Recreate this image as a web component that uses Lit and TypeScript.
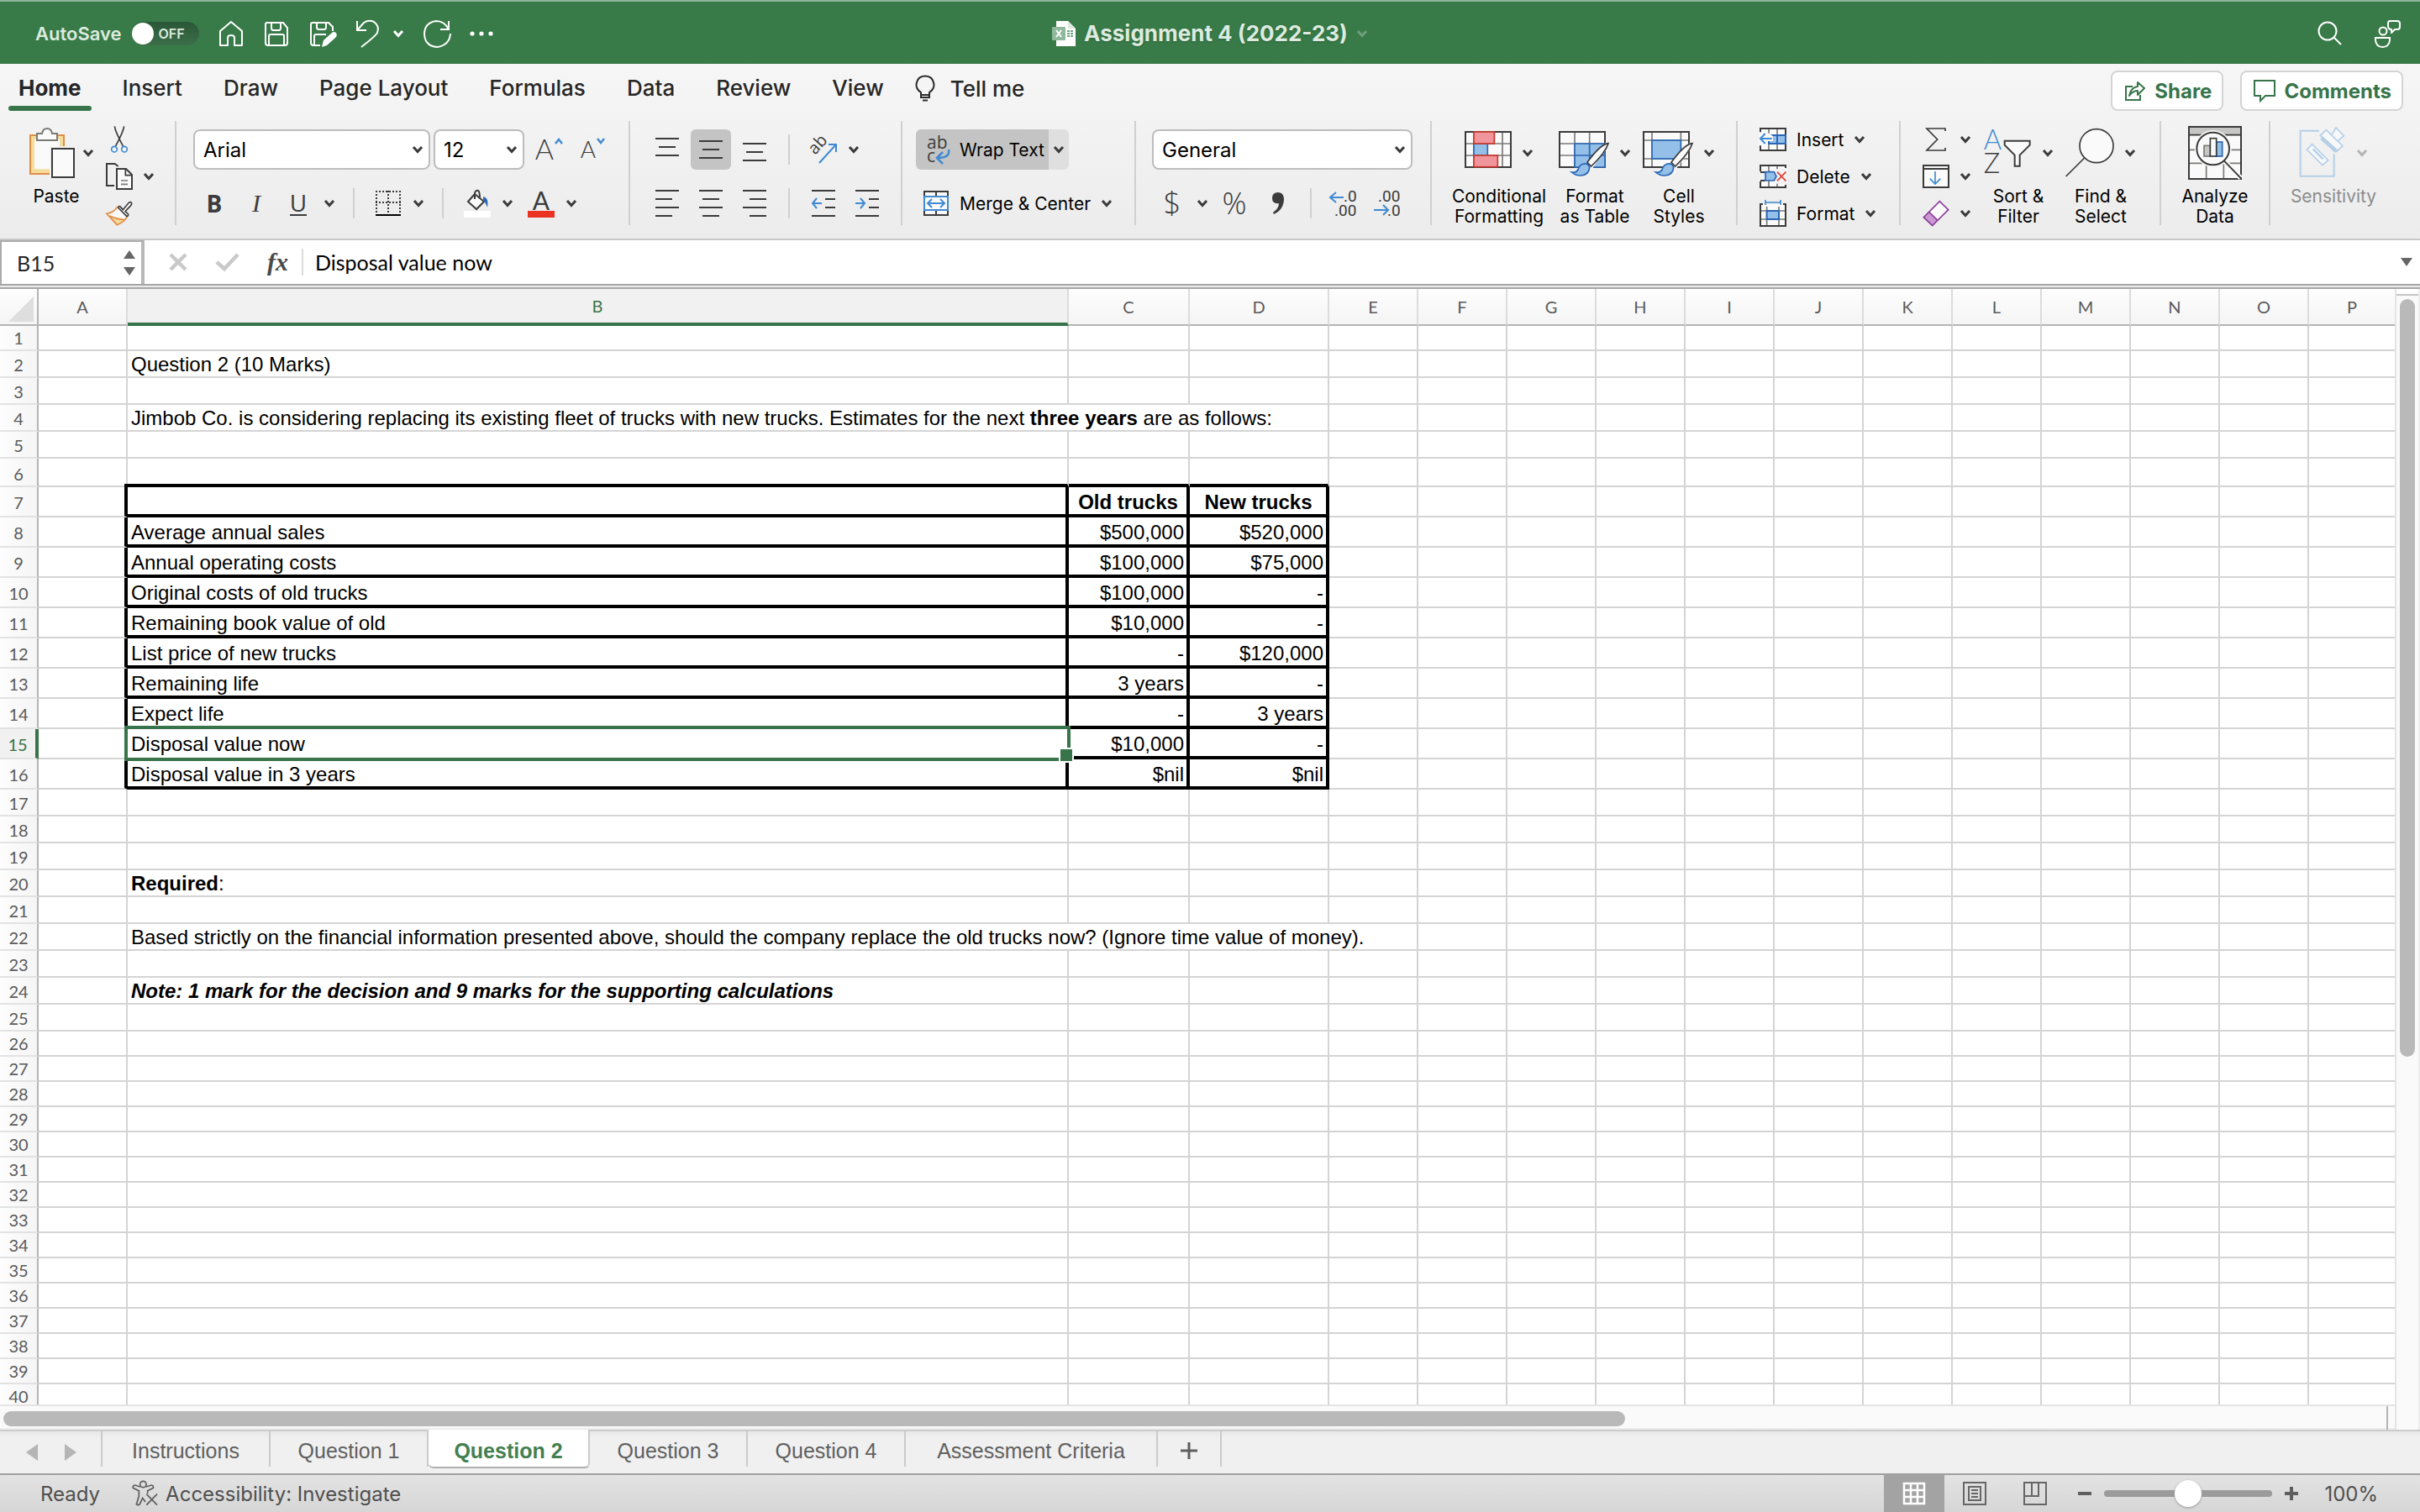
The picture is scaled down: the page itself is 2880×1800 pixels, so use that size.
import { LitElement, html, svg, css, nothing, TemplateResult } from "lit";
import { customElement } from "lit/decorators.js";
import { classMap } from "lit/directives/class-map.js";

const INK = "#3b3b3b";
const BLUE = "#3f8ad2";
const DEEP = "#2a66b5";
const SKY = "#93bfe8";

const icon = (w: number, h: number, box: string, body: unknown) =>
  html`<svg width=${w} height=${h} viewBox=${box} fill="none" stroke-width="2" aria-hidden="true">${body}</svg>`;

const chevron = (color = INK) =>
  icon(14, 10, "0 0 14 10", svg`<path d="M2 2 L7 7.5 L12 2" stroke=${color} stroke-width="3" />`);

const bars = (rows: number[][], extra: unknown = nothing, w = 28, h = 28) =>
  icon(w, h, `0 0 ${w} ${h}`, svg`
    <path d=${rows.map(([a, b, y]) => `M${a} ${y}H${b}`).join("")} stroke=${INK} />${extra}`);

const icons = {
  home: icon(32, 32, "0 0 32 32", svg`<path d="M3 13 L16 2 L29 13 V30 H20 V21 Q20 18 16 18 Q12 18 12 21 V30 H3 Z" stroke="#fff" stroke-linejoin="round" />`),
  save: icon(32, 32, "0 0 32 32", svg`<path d="M4 3 H24 L29 9 V27 Q29 30 26 30 H6 Q3 30 3 27 V5 Q3 3 5 3 Z M10 3 V9 Q10 12 12 12 H19 Q21 12 21 9 V3 M7 30 V19 Q7 17 9 17 H23 Q25 17 25 19 V30" stroke="#fff" />`),
  saveAs: icon(34, 34, "0 0 34 34", svg`<path d="M14 31 H6 Q3 31 3 28 V6 Q3 4 5 4 H24 L29 9 V14 M10 4 V9 Q10 12 12 12 H19 Q21 12 21 9 V4 M7 31 V20 Q7 18 9 18 H21" stroke="#fff" /><path d="M16 33 L18 25 L28 16 Q31 14 33 16.500 Q35 19 32 22 L22 31 Z" fill="#fff" />`),
  undo: icon(30, 34, "0 0 30 34", svg`<path d="M2 2 V13 H13 M2 13 L10 4 Q16 0 22 3 Q29 8 26 16 Q25 19 7 33" stroke="#fff" />`),
  redo: icon(34, 34, "0 0 34 34", svg`<path d="M31 2 V12 H21 M31 12 Q26 2 16 2 Q2 4 2 18 Q3 32 17 33 Q32 31 33 17" stroke="#fff" />`),
  dots: icon(28, 8, "0 0 28 8", svg`<circle cx="3" cy="4" r="2.600" fill="#fff" /><circle cx="14" cy="4" r="2.600" fill="#fff" /><circle cx="25" cy="4" r="2.600" fill="#fff" />`),
  file: icon(28, 30, "0 0 28 30", svg`
    <path d="M5 0 H19 L28 9 V30 H5 Z" fill="#fff" /><path d="M19 0 V9 H28" fill="#dfe9e1" />
    <rect x="0" y="7" width="16" height="16" rx="1" fill="#8fb99b" />
    <path d="M5 11 L11 19 M11 11 L5 19" stroke="#fff" />
    <path d="M18 12h3M22 12h3M18 15h3M22 15h3M18 18h3M22 18h3" stroke="#6fa480" />`),
  search: icon(30, 30, "0 0 30 30", svg`<circle cx="12" cy="12" r="10.500" stroke="#fff" /><path d="M19.500 19.500 L28 28" stroke="#fff" />`),
  people: icon(34, 34, "0 0 34 34", svg`<circle cx="12" cy="14" r="4.500" stroke="#fff" /><path d="M3 22 H20 V25 Q19 33 11.500 33 Q4 33 3 25 Z" stroke="#fff" /><path d="M20 2 H29 Q32 2 32 5 V9 Q32 12 29 12 H26 L22 16 V12 Q18 12 18 8 V5 Q18 2 20 2 Z" stroke="#fff" stroke-linejoin="round" />`),
  bulb: icon(24, 32, "0 0 24 32", svg`<path d="M7 24 V21 Q1 17 1.500 11 Q3 1.500 12 1.500 Q21 1.500 22.500 11 Q23 17 17 21 V27 H7 V24 H17 M9 30.500 H15" stroke="#2b2b2b" />`),
  share: icon(26, 26, "0 0 26 26", svg`<path d="M10 8 H2 V24 H19 V18" stroke="#38744a" /><path d="M6 19 Q8 9 16 8 V3 L24 10 L16 18 V13 Q10 13 6 19 Z" stroke="#38744a" stroke-linejoin="round" />`),
  comment: icon(26, 26, "0 0 26 26", svg`<path d="M1 1 H25 V19 H14 L8 25 V19 H1 Z" stroke="#38744a" />`),
  paste: icon(56, 62, "99 39 168 186", svg`
    <rect x="105" y="69" width="120" height="138" fill="#f5dc9b" stroke="#e08d45" stroke-width="6" />
    <rect x="120" y="84" width="90" height="106" fill="#fafafa" />
    <path d="M129 87 V63 H147 Q150 45 165 45 Q180 45 183 63 H201 V87 Z" fill="#fafafa" stroke="#7a7a76" stroke-width="6" />
    <rect x="174" y="108" width="93" height="117" fill="#f2f2f2" />
    <rect x="183" y="117" width="78" height="102" fill="#fafafa" stroke=${INK} stroke-width="6" />`),
  cut: icon(22, 34, "393 28 66 102", svg`
    <path d="M409 32 Q412 52 440 104 M443 32 Q440 52 412 104" stroke=${INK} stroke-width="5" />
    <circle cx="408" cy="114" r="10" stroke=${BLUE} stroke-width="5" /><circle cx="444" cy="114" r="10" stroke=${BLUE} stroke-width="5" />`),
  copy: icon(34, 34, "375 159 102 102", svg`
    <path d="M408 243 H381 V165 H410 L422 174" stroke=${INK} stroke-width="6" />
    <path d="M417 183 H450 L471 204 V255 H417 Z" fill="#fafafa" stroke=${INK} stroke-width="6" />
    <path d="M448 183 V206 H471" stroke=${INK} stroke-width="5" /><path d="M432 225 H456 M432 238 H456" stroke="#7a7a76" stroke-width="5" />`),
  painter: icon(34, 32, "378 290 100 96", svg`
    <path d="M422 314 Q408 336 383 339 L420 379 Q450 366 458 348 Z" fill="#fafafa" />
    <path d="M394 348 Q424 352 448 358 Q438 372 420 379 Z" fill="#f5dc9b" />
    <path d="M422 314 Q408 336 383 339 L420 379 Q448 368 455 350 M394 347 Q420 360 446 361" stroke="#e08d45" stroke-width="5" />
    <path d="M441 325 L462 300 Q468 296 471 300 Q474 305 469 310 L449 331 L459 340 Q462 346 455 349 L424 318 Q426 308 433 316 Z" fill="#fafafa" stroke=${INK} stroke-width="5" />`),
  borders: icon(32, 32, "0 0 32 32", svg`
    <path d="M1 2 H31 M1 15 H31" stroke=${INK} stroke-dasharray="2 2" /><path d="M2 1 V28 M16 1 V28 M30 1 V28" stroke=${INK} stroke-dasharray="2 2" />
    <path d="M1 30 H31" stroke="#000" />`),
  bucket: icon(32, 34, "0 0 32 34", svg`
    <path d="M13 6 L24 15 L15 24 L5 15 Z" fill="#fafafa" stroke=${INK} /><path d="M13 12 V5 Q14 1 17 2 Q19 3 19 11" stroke=${INK} />
    <path d="M23 9 Q30 10 28 22 Q26 16 23 13 Z" fill=${DEEP} /><rect x="0" y="26" width="32" height="8" fill="#fff" />`),
  up: icon(12, 8, "0 0 12 8", svg`<path d="M2 7 L6 2 L10 7" stroke=${BLUE} stroke-width="2.500" />`),
  down: icon(12, 8, "0 0 12 8", svg`<path d="M2 1 L6 6 L10 1" stroke=${BLUE} stroke-width="2.500" />`),
  top: bars([[0, 28, 1], [4, 24, 11], [0, 28, 21]]),
  middle: bars([[0, 28, 4], [4, 24, 14], [0, 28, 24]]),
  bottom: bars([[0, 28, 7], [4, 24, 17], [0, 28, 27]]),
  left: bars([[0, 28, 1], [0, 20, 11], [0, 28, 21], [0, 20, 31]], nothing, 28, 32),
  center: bars([[0, 28, 1], [4, 24, 11], [0, 28, 21], [4, 24, 31]], nothing, 28, 32),
  right: bars([[0, 28, 1], [8, 28, 11], [0, 28, 21], [8, 28, 31]], nothing, 28, 32),
  outdent: bars([[0, 28, 1], [16, 28, 11], [16, 28, 21], [0, 28, 31]], svg`<path d="M12 16 H1 M6 10 L1 16 L6 22" stroke=${BLUE} />`, 28, 32),
  indent: bars([[0, 28, 1], [16, 28, 11], [16, 28, 21], [0, 28, 31]], svg`<path d="M0 16 H11 M6 10 L11 16 L6 22" stroke=${BLUE} />`, 28, 32),
  orient: icon(34, 34, "0 0 34 34", svg`
    <text x="7" y="24" transform="rotate(-48 7 24)" class="glyph" font-size="20">ab</text>
    <path d="M12 33 L32 11 M23 11 H32 V20" stroke=${BLUE} />`),
  wrap: icon(32, 34, "0 0 32 34", svg`
    <text x="5" y="16" class="glyph" font-size="21">ab</text><text x="5" y="32" class="glyph" font-size="21">c</text>
    <path d="M31 17 Q33 27 18 27 M24 20 L17 27 L24 34" stroke=${BLUE} stroke-width="2.500" />`),
  merge: icon(32, 32, "0 0 32 32", svg`
    <path d="M2 2 H30 V30 H2 Z M16 1 V8 M16 24 V31" fill="#fafafa" stroke=${INK} />
    <rect x="2" y="8" width="28" height="16" fill="#fafafa" stroke=${BLUE} /><path d="M6 16 H26 M11 11 L6 16 L11 21 M21 11 L26 16 L21 21" stroke=${BLUE} />`),
  comma: icon(16, 28, "0 0 16 28", svg`<path d="M8 1 Q15 1 15 10 Q14 22 3 27 L2 25 Q9 20 9 14 Q1 15 1 8 Q1 1 8 1 Z" fill=${INK} />`),
  decInc: icon(34, 34, "0 0 34 34", svg`
    <text x="17" y="15" class="num">.0</text><text x="6" y="32" class="num">.00</text><path d="M17 10 H1 M8 4 L1 10 L8 16" stroke=${BLUE} />`),
  decDec: icon(34, 34, "0 0 34 34", svg`
    <text x="6" y="15" class="num">.00</text><text x="17" y="32" class="num">.0</text><path d="M1 25 H18 M12 19 L18 25 L12 31" stroke=${BLUE} />`),
  condFmt: icon(56, 60, "39 48 168 180", svg`
    <path d="M42 63 H204 V189 H42 Z" fill="#fafafa" /><path d="M42 105 H204 M42 147 H204 M72 63 V189 M145 63 V189 M174 63 V189" stroke="#7a7a76" stroke-width="5" />
    <path d="M42 63 H204 V189 H42 Z" stroke=${INK} stroke-width="6" />
    <rect x="122" y="108" width="48" height="36" fill="#fafafa" /><rect x="72" y="105" width="49" height="42" fill=${SKY} stroke=${DEEP} stroke-width="5" />
    <rect x="72" y="63" width="73" height="42" fill="#f0959b" stroke="#c8372b" stroke-width="5" /><rect x="72" y="147" width="85" height="41" fill="#f0959b" stroke="#c8372b" stroke-width="5" />`),
  tableFmt: icon(60, 60, "384 48 180 180", svg`
    <path d="M387 63 H549 V189 H387 Z" fill="#fafafa" /><path d="M387 105 H549 M387 147 H549 M441 63 V189 M494 63 V189" stroke="#7a7a76" stroke-width="5" />
    <path d="M387 63 H549 V189 H387 Z" stroke=${INK} stroke-width="6" />
    <path d="M441 105 H549 V189 H441 Z M441 147 H549 M494 105 V189" fill=${SKY} stroke=${DEEP} stroke-width="5" />${brush(0)}`),
  cellFmt: icon(60, 60, "684 48 180 180", svg`
    <path d="M687 63 H849 V189 H687 Z" fill="#fafafa" /><path d="M687 93 H849 M687 159 H849 M717 63 V189 M820 63 V189" stroke="#7a7a76" stroke-width="5" />
    <path d="M687 63 H849 V189 H687 Z" stroke=${INK} stroke-width="6" />
    <rect x="717" y="93" width="103" height="66" fill=${SKY} stroke=${DEEP} stroke-width="5" />${brush(300)}`),
  insert: icon(32, 28, "1092 36 96 84", svg`
    <path d="M1095 39 H1185 V117 H1095 Z" fill="#fafafa" /><path d="M1125 39 V117 M1155 39 V117" stroke="#7a7a76" stroke-width="5" /><path d="M1095 39 H1185 V117 H1095 Z" stroke=${INK} stroke-width="6" />
    <path d="M1125 63 H1185 V93 H1125 Z M1155 63 V93" fill=${SKY} stroke=${DEEP} stroke-width="6" />
    <path d="M1089 52 H1118 L1140 66 V84 H1118 L1110 100 H1089 Z" fill="#f8f8f8" /><path d="M1136 75 H1096 M1112 57 L1095 75 L1112 93" stroke=${BLUE} stroke-width="6" />`),
  del: icon(32, 28, "1092 168 96 84", svg`
    <path d="M1095 171 H1185 V249 H1095 Z" fill="#fafafa" /><path d="M1125 171 V249 M1155 171 V249" stroke="#7a7a76" stroke-width="5" />
    <path d="M1095 192 V171 H1185 V180 M1095 228 V249 H1185 V240 M1095 195 H1112 M1095 225 H1112" stroke=${INK} stroke-width="6" />
    <path d="M1090 198 H1112 V222 H1090 Z M1150 184 H1190 V236 H1150 Z" fill="#f2f2f2" />
    <path d="M1113 194 H1144 L1152 210 L1144 225 H1113 Z" fill=${SKY} stroke=${DEEP} stroke-width="5" /><path d="M1155 194 L1186 226 M1186 194 L1155 226" stroke="#dc4b43" stroke-width="6" />`),
  format: icon(32, 32, "1092 294 96 96", svg`
    <path d="M1095 309 H1185 V387 H1095 Z" fill="#fafafa" /><path d="M1095 333 H1185 M1095 363 H1185 M1118 318 V387 M1161 318 V387" stroke="#7a7a76" stroke-width="5" />
    <path d="M1104 309 H1095 V387 H1185 V309 H1176" stroke=${INK} stroke-width="6" /><rect x="1118" y="333" width="43" height="30" fill=${SKY} stroke=${DEEP} stroke-width="6" />
    <path d="M1113 303 H1167 M1113 294 V312 M1167 294 V312" stroke=${BLUE} stroke-width="5" />`),
  sum: icon(26, 28, "34 36 78 84", svg`<path d="M106 48 V39 H40 L78 78 L40 117 H106 V108" stroke=${INK} stroke-width="5" />`),
  fill: icon(32, 28, "24 168 96 84", svg`<path d="M27 171 H117 V249 H27 Z M27 183 H117" fill="#fafafa" stroke=${INK} stroke-width="6" /><path d="M69 192 V236 M50 218 L69 237 L88 218" stroke=${BLUE} stroke-width="5" />`),
  eraser: icon(32, 32, "23 293 96 96", svg`<path d="M84 298 L115 328 L58 385 L27 355 Z" fill="#fafafa" /><path d="M46 336 L77 366 L58 385 L27 355 Z" fill="#cb98d3" /><path d="M84 298 L115 328 L58 385 L27 355 Z M46 336 L77 366" stroke="#8c3e9d" stroke-width="5" />`),
  sort: icon(58, 60, "244 40 174 180", svg`
    <text x="246" y="119" class="glyph light blue" font-size="98">A</text><text x="246" y="203" class="glyph light" font-size="98">Z</text>
    <path d="M321 87 H411 V102 L375 138 V177 H357 V138 L321 102 Z" fill="#fafafa" stroke=${INK} stroke-width="6" />`),
  find: icon(58, 60, "540 40 174 180", svg`<circle cx="651" cy="105" r="60" fill="#fafafa" stroke=${INK} stroke-width="5" /><path d="M608 148 L542 214" stroke=${INK} stroke-width="5" />`),
  analyze: icon(64, 64, "972 30 192 192", svg`
    <rect x="975" y="33" width="186" height="186" fill="#fafafa" /><rect x="975" y="33" width="186" height="28" fill="#c6c6c4" />
    <path d="M975 115 H1161 M975 163 H1161 M1037 163 V219 M1099 163 V219" stroke="#7a7a76" stroke-width="5" /><path d="M975 62 H1161" stroke=${INK} stroke-width="5" />
    <path d="M975 33 H1161 V219 H975 Z" stroke=${INK} stroke-width="6" /><path d="M1098 152 L1160 216" stroke="#fafafa" stroke-width="18" />
    <circle cx="1061" cy="111" r="66" fill="#fafafa" /><circle cx="1061" cy="111" r="58" stroke=${INK} stroke-width="6" /><path d="M1101 155 L1162 218" stroke=${INK} stroke-width="6" />
    <rect x="1029" y="100" width="22" height="38" fill="#c6c6c4" stroke="#7a7a76" stroke-width="5" /><rect x="1073" y="87" width="21" height="51" fill=${SKY} stroke=${DEEP} stroke-width="5" /><rect x="1051" y="74" width="22" height="64" fill="#fafafa" stroke=${INK} stroke-width="5" />`),
  sensitivity: icon(56, 64, "1390 28 168 192", svg`
    <g stroke="#b5cfe8" stroke-width="6"><path d="M1462 45 H1395 V207 H1515 V128" />
    <path d="M1437 93 L1494 150 L1474 168 L1418 112 Z" fill="#f6f8fa" stroke-width="5" /><path d="M1440 110 L1476 146" stroke-width="7" />
    <path d="M1487 42 L1546 99 L1524 119 L1466 62 Z" fill="#f6f8fa" stroke-width="5" /><path d="M1470 70 L1524 119" stroke-width="14" /><path d="M1508 58 L1522 34 L1550 63 L1530 80" fill="#f6f8fa" stroke-width="5" /></g>`),
  cancel: icon(24, 24, "0 0 24 24", svg`<path d="M3 3 L21 21 M21 3 L3 21" stroke="#c9c9c9" stroke-width="4.500" />`),
  check: icon(30, 24, "0 0 30 24", svg`<path d="M2 12 L11 20 L27 3" stroke="#c9c9c9" stroke-width="4.500" />`),
  tri: (dir: "up" | "down" | "left" | "right", color: string) =>
    icon(16, 20, "0 0 16 20", svg`<path fill=${color} d=${{ up: "M1 15 L8 5 L15 15 Z", down: "M1 5 L15 5 L8 15 Z", left: "M15 0 L1 10 L15 20 Z", right: "M1 0 L15 10 L1 20 Z" }[dir]} />`),
  a11y: icon(32, 32, "472 214 96 96", svg`<g stroke="#5c5c5c" stroke-width="5"><circle cx="512" cy="229" r="11" />
    <path d="M502 238 L482 232 Q474 234 476 242 L497 252 V272 L488 300 Q494 306 500 300 L510 278 L520 292 M522 238 L542 232 Q550 234 548 242 L528 252 V262" /><path d="M524 264 L562 303 M562 264 L524 303" /></g>`),
  viewNormal: icon(28, 28, "0 0 28 28", svg`<path d="M2 2 H26 V26 H2 Z M2 10 H26 M2 18 H26 M10 2 V26 M18 2 V26" stroke="#fff" stroke-width="2.500" />`),
  viewPage: icon(28, 28, "0 0 28 28", svg`<path d="M1 1 H27 V27 H1 Z M7 6 H21 V22 H7 Z M10 10 H18 M10 14 H18 M10 18 H18" stroke="#666" />`),
  viewBreak: icon(28, 28, "0 0 28 28", svg`<path d="M1 1 H27 V27 H1 Z M1 17 H18 V1 M10 1 V17" stroke="#666" />`),
  minus: icon(18, 18, "0 0 18 18", svg`<path d="M1 9 H17" stroke="#5f5f5f" stroke-width="4" />`),
  plus: icon(18, 18, "0 0 18 18", svg`<path d="M1 9 H17 M9 1 V17" stroke="#5f5f5f" stroke-width="4" />`),
  add: icon(20, 20, "0 0 20 20", svg`<path d="M0 10 H20 M10 0 V20" stroke="#5f5f5f" stroke-width="3" />`),
};

function brush(dx: number) {
  return svg`<g transform="translate(${dx} 0)">
    <path d="M560 104 L500 186 Q494 216 464 220 Q440 222 430 207" stroke="#f2f2f2" stroke-width="16" />
    <path d="M561 104 Q534 106 486 172 L500 186 Q550 138 561 104 Z" fill="#fafafa" stroke=${INK} stroke-width="5" />
    <path d="M494 190 Q488 172 470 178 Q456 184 453 198 Q446 210 430 207 Q444 220 464 219 Q492 216 494 190 Z" fill=${SKY} stroke=${DEEP} stroke-width="5" /></g>`;
}

interface SheetRow { label: string; old: string; next: string }

const COLUMNS = "ABCDEFGHIJKLMNOP".split("");
const RIBBON_TABS = ["Home", "Insert", "Draw", "Page Layout", "Formulas", "Data", "Review", "View"];
const SHEETS = ["Instructions", "Question 1", "Question 2", "Question 3", "Question 4", "Assessment Criteria"];
const TABLE_START = 7;
const TABLE: SheetRow[] = [
  { label: "", old: "Old trucks", next: "New trucks" },
  { label: "Average annual sales", old: "$500,000", next: "$520,000" },
  { label: "Annual operating costs", old: "$100,000", next: "$75,000" },
  { label: "Original costs of old trucks", old: "$100,000", next: "-" },
  { label: "Remaining book value of old", old: "$10,000", next: "-" },
  { label: "List price of new trucks", old: "-", next: "$120,000" },
  { label: "Remaining life", old: "3 years", next: "-" },
  { label: "Expect life", old: "-", next: "3 years" },
  { label: "Disposal value now", old: "$10,000", next: "-" },
  { label: "Disposal value in 3 years", old: "$nil", next: "$nil" },
];
const SELECTED_ROW = 15;
const NOTES: Record<number, { span: number; body: TemplateResult }> = {
  2: { span: 1, body: html`Question 2 (10 Marks)` },
  4: { span: 3, body: html`Jimbob Co. is considering replacing its existing fleet of trucks with new trucks. Estimates for the next <b>three years</b> are as follows:` },
  20: { span: 1, body: html`<b>Required</b>:` },
  22: { span: 4, body: html`Based strictly on the financial information presented above, should the company replace the old trucks now? (Ignore time value of money).` },
  24: { span: 1, body: html`<b><i>Note: 1 mark for the decision and 9 marks for the supporting calculations</i></b>` },
};

const shared = css`
  :host, * { box-sizing: border-box; }
  svg { display: block; flex: none; overflow: visible; }
  button { appearance: none; border: 0; margin: 0; padding: 0; background: none; font: inherit; color: inherit; display: flex; align-items: center; justify-content: center; white-space: nowrap; }
  input, select { appearance: none; border: 0; margin: 0; padding: 0; background: none; font: inherit; color: inherit; border-radius: 0; min-width: 0; outline: 0; }
  .glyph { font-family: "Open Sans", sans-serif; fill: #3b3b3b; stroke: none; }
  .glyph.light { font-family: Lato, sans-serif; font-weight: 300; }
  .glyph.blue { fill: #3f8ad2; }
  .num { font: 19px Roboto, sans-serif; fill: #3b3b3b; stroke: none; }
`;

@customElement("title-bar")
export class TitleBar extends LitElement {
  static styles = [shared, css`
    :host { display: grid; grid-template-columns: 1fr auto 1fr; align-items: center; height: 76px; padding: 2px 22px 0; background: #387a48; border-top: 2px solid #8db398; color: #dcebdf; }
    .side { display: flex; align-items: center; gap: 22px; padding-left: 20px; }
    .end { justify-content: flex-end; gap: 36px; }
    .auto { display: flex; align-items: center; gap: 12px; font-weight: 600; font-size: 22px; }
    .switch { width: 80px; height: 28px; border-radius: 14px; background: linear-gradient(#2a5737, #3c6e4a); justify-content: flex-start; gap: 6px; font-size: 16px; font-weight: 600; }
    .knob { width: 26px; height: 26px; border-radius: 13px; background: #fff; }
    .undo { display: flex; align-items: center; gap: 14px; }
    .name { gap: 10px; text-shadow: 0 1px 2px #2c6138; }
    h1 { margin: 0; font-size: 26px; line-height: 32px; font-weight: 700; }
  `];
  render() {
    return html`
      <div class="side">
        <div class="auto"><span id="autosave">AutoSave</span>
          <button class="switch" role="switch" aria-checked="false" aria-labelledby="autosave"><span class="knob"></span>OFF</button></div>
        <button aria-label="Home">${icons.home}</button>
        <button aria-label="Save">${icons.save}</button>
        <button aria-label="Save a copy">${icons.saveAs}</button>
        <div class="undo"><button aria-label="Undo">${icons.undo}</button><button aria-label="Undo history">${chevron("#fff")}</button></div>
        <button aria-label="Redo">${icons.redo}</button>
        <button aria-label="More">${icons.dots}</button>
      </div>
      <button class="name">${icons.file}<h1>Assignment 4 (2022-23)</h1>${chevron("#6f9f7c")}</button>
      <div class="side end"><button aria-label="Search">${icons.search}</button><button aria-label="Share presence">${icons.people}</button></div>`;
  }
}

@customElement("ribbon-bar")
export class RibbonBar extends LitElement {
  static styles = [shared, css`
    :host { display: block; height: 210px; background: linear-gradient(#f6f6f6, #ececec); border-bottom: 2px solid #c8c8c8; color: #000; }
    .tabs { display: flex; height: 64px; padding: 0 20px 0 10px; color: #262626; font-size: 26px; font-weight: 500; }
    .tabs nav { display: flex; flex: 1; gap: 25px; }
    .tab { flex-direction: column; align-items: stretch; justify-content: flex-end; height: 56px; }
    .tab span { padding: 0 12px; line-height: 42px; }
    .tab i { height: 6px; border-radius: 3px; }
    .tab.on { font-weight: 700; }
    .tab.on i { background: #38744a; }
    .tell { height: 56px; gap: 18px; padding-top: 2px; }
    .actions { display: flex; gap: 20px; padding-top: 8px; }
    .actions button { height: 48px; padding: 0 12px 0 14px; gap: 10px; background: #fff; border: 2px solid #d4d4d4; border-radius: 8px; color: #38744a; font-weight: 700; font-size: 24px; }
    .groups { display: flex; align-items: flex-start; padding-top: 4px; font-size: 21px; }
    .group { flex: none; display: flex; align-items: flex-start; height: 124px; border-right: 2px solid #d0d0d0; }
    .group:last-child { border-right: 0; }
    .clip { width: 210px; padding-left: 34px; }
    .font { width: 540px; padding-left: 20px; }
    .align { width: 324px; padding-left: 20px; }
    .wrapping { width: 278px; padding-left: 16px; }
    .number { width: 352px; padding-left: 19px; }
    .styles { width: 364px; padding-left: 23px; }
    .cells { width: 194px; padding-left: 26px; }
    .edit { width: 310px; padding-left: 26px; }
    .analysis { width: 130px; padding-left: 14px; }
    .protect { width: 130px; padding-left: 20px; }
    .rows { display: flex; flex-direction: column; gap: 16px; padding-top: 10px; }
    .row { display: flex; align-items: center; height: 48px; }
    .spaced { gap: 4px; }
    .combo { display: grid; align-items: center; height: 48px; background: #fff; border: 2px solid #bdbdbd; border-radius: 8px; font-size: 24px; }
    .combo select, .combo svg { grid-area: 1 / 1; }
    .combo select { padding-left: 10px; height: 44px; }
    .combo svg { justify-self: end; margin-right: 6px; pointer-events: none; }
    .wide { width: 282px; } .narrow { width: 108px; } .format { width: 310px; }
    .b48 { width: 48px; height: 48px; border-radius: 6px; }
    .b50 { width: 50px; height: 48px; }
    .b52 { width: 52px; height: 48px; }
    .more { width: 24px; height: 48px; }
    .on48 { background: #c4c4c4; }
    .sep { flex: none; width: 2px; height: 36px; margin: 0 16px; background: #d0d0d0; }
    .spaced .sep, .number .sep { margin: 0 12px; }
    .split, .pair { display: flex; }
    .bold, .under { color: #3b3b3b; font: 28px/32px "Open Sans", sans-serif; }
    .bold { font-weight: 700; }
    .ital { color: #3b3b3b; font: italic 30px/32px "Liberation Serif", serif; }
    .under span { border-bottom: 2px solid #3b3b3b; line-height: 28px; }
    .cur { color: #3b3b3b; font: 300 36px/36px "Open Sans", sans-serif; }
    .grow { align-items: flex-start; padding-top: 6px; color: #3b3b3b; font: 300 34px/34px Lato, sans-serif; }
    .shrink { font-size: 28px; }
    .grow svg { margin-top: 4px; }
    .fontcolor { flex-direction: column; margin-left: 4px; color: #3b3b3b; font: 30px/26px Lato, sans-serif; }
    .fontcolor i { width: 32px; height: 8px; background: #ea3323; }
    .wraptext { height: 48px; width: 158px; padding-left: 8px; gap: 12px; justify-content: flex-start; background: #c4c4c4; border-radius: 6px 0 0 6px; }
    .wrapmore { width: 24px; height: 48px; background: #dfdfdf; border-radius: 0 6px 6px 0; }
    .merge { height: 48px; padding-left: 8px; gap: 12px; }
    .stack { flex-direction: column; gap: 8px; padding-top: 6px; line-height: 24px; text-align: center; align-items: center; justify-content: flex-start; }
    .stack .ico { display: flex; align-items: center; gap: 12px; height: 64px; }
    .stack.paste { width: 66px; }
    .stack.paste .ico { align-self: flex-start; gap: 8px; }
    .large { width: 114px; } .medium { width: 86px; } .tool { width: 84px; } .full { width: 100px; }
    .styles, .edit { gap: 14px; }
    .list { display: flex; flex-direction: column; }
    .list.after { margin-left: 26px; }
    .list button { height: 44px; gap: 12px; justify-content: flex-start; }
    .slot { width: 32px; display: flex; justify-content: center; }
    .dim { color: #8c8c8c; }
  `];

  private stack(size: string, art: unknown, label: unknown, more: unknown = chevron()) {
    return html`<button class="stack ${size}"><span class="ico">${art}${more}</span><span>${label}</span></button>`;
  }
  private tool(label: string, art: unknown, cls = "b48") {
    return html`<button class=${cls} aria-label=${label}>${art}</button>`;
  }
  private more(label: string, cls = "more") {
    return html`<button class=${cls} aria-label=${label}>${chevron()}</button>`;
  }
  private combo(label: string, value: string, cls: string) {
    return html`<div class="combo ${cls}"><select aria-label=${label}><option>${value}</option></select>${chevron()}</div>`;
  }
  private item(label: string, art: unknown, text = "", more = true) {
    return html`<button aria-label=${label}><span class="slot">${art}</span>${text ? html`<span>${text}</span>` : nothing}${more ? chevron() : nothing}</button>`;
  }

  render() {
    return html`
      <div class="tabs">
        <nav aria-label="Ribbon">
          ${RIBBON_TABS.map((t, i) => html`<button class=${classMap({ tab: true, on: i === 0 })}><span>${t}</span><i></i></button>`)}
          <button class="tell">${icons.bulb}<span>Tell me</span></button>
        </nav>
        <div class="actions"><button>${icons.share}Share</button><button>${icons.comment}Comments</button></div>
      </div>
      <div class="groups">
        <section class="group clip">
          ${this.stack("paste", icons.paste, "Paste")}
          <div class="list after">${this.item("Cut", icons.cut, "", false)}${this.item("Copy", icons.copy)}${this.item("Format painter", icons.painter, "", false)}</div>
        </section>
        <section class="group font"><div class="rows">
          <div class="row spaced">${this.combo("Font", "Arial", "wide")}${this.combo("Font size", "12", "narrow")}
            <div class="pair"><button class="b52 grow" aria-label="Increase font size">A${icons.up}</button><button class="b52 grow shrink" aria-label="Decrease font size">A${icons.down}</button></div></div>
          <div class="row"><button class="b50 bold">B</button><button class="b50 ital">I</button><button class="b50 under"><span>U</span></button>${this.more("Underline style")}
            <i class="sep"></i>${this.tool("Borders", icons.borders)}${this.more("Border style")}
            <i class="sep"></i>${this.tool("Fill colour", icons.bucket)}${this.more("Fill colours")}
            <button class="b48 fontcolor" aria-label="Font colour">A<i></i></button>${this.more("Font colours")}</div>
        </div></section>
        <section class="group align"><div class="rows">
          <div class="row spaced">${this.tool("Top align", icons.top)}${this.tool("Middle align", icons.middle, "b48 on48")}${this.tool("Bottom align", icons.bottom)}
            <i class="sep"></i><span class="split">${this.tool("Orientation", icons.orient)}${this.more("Orientation options")}</span></div>
          <div class="row spaced">${this.tool("Align left", icons.left)}${this.tool("Center", icons.center)}${this.tool("Align right", icons.right)}
            <i class="sep"></i>${this.tool("Decrease indent", icons.outdent)}${this.tool("Increase indent", icons.indent)}</div>
        </div></section>
        <section class="group wrapping"><div class="rows">
          <div class="row"><button class="wraptext">${icons.wrap}Wrap Text</button>${this.more("Wrap options", "wrapmore")}</div>
          <div class="row"><button class="merge">${icons.merge}Merge &amp; Center${chevron()}</button></div>
        </div></section>
        <section class="group number"><div class="rows">
          ${this.combo("Number format", "General", "format")}
          <div class="row"><button class="b48 cur">$</button>${this.more("Currency")}<button class="b52 cur">%</button>${this.tool("Comma style", icons.comma, "b52")}
            <i class="sep"></i>${this.tool("Increase decimal", icons.decInc, "b52")}${this.tool("Decrease decimal", icons.decDec, "b52")}</div>
        </div></section>
        <section class="group styles">
          ${this.stack("large", icons.condFmt, html`Conditional<br />Formatting`)}
          ${this.stack("medium", icons.tableFmt, html`Format<br />as Table`)}
          ${this.stack("medium", icons.cellFmt, html`Cell<br />Styles`)}
        </section>
        <section class="group cells"><div class="list">
          ${this.item("Insert", icons.insert, "Insert")}${this.item("Delete", icons.del, "Delete")}${this.item("Format", icons.format, "Format")}
        </div></section>
        <section class="group edit">
          <div class="list">${this.item("AutoSum", icons.sum)}${this.item("Fill", icons.fill)}${this.item("Clear", icons.eraser)}</div>
          ${this.stack("tool", icons.sort, html`Sort &amp;<br />Filter`)}
          ${this.stack("tool", icons.find, html`Find &amp;<br />Select`)}
        </section>
        <section class="group analysis">${this.stack("full", icons.analyze, html`Analyze<br />Data`, nothing)}</section>
        <section class="group protect">${this.stack("large dim", icons.sensitivity, "Sensitivity", chevron("#b4b4b4"))}</section>
      </div>`;
  }
}

@customElement("formula-bar")
export class FormulaBar extends LitElement {
  static styles = [shared, css`
    :host { display: flex; align-items: center; height: 58px; padding-bottom: 6px; background: linear-gradient(#fff 52px, #a6a6a6 52px 54px, #ececec 54px 56px, #a6a6a6 56px); font: 25px/30px Lato, sans-serif; color: #000; }
    .name { display: flex; align-items: center; width: 172px; height: 52px; border: 2px solid #ababab; border-right: 4px solid #b8b8b8; border-bottom: 0; color: #262626; }
    .name input { flex: 1; width: 100px; padding-left: 18px; }
    .steps { display: flex; flex-direction: column; padding-right: 6px; }
    .tools { display: flex; align-items: center; height: 32px; gap: 32px; padding: 0 16px 0 28px; border-right: 2px solid #dcdcdc; }
    .fx { color: #4a4a4a; font: italic 700 30px/30px "Liberation Serif", serif; }
    .value { flex: 1; padding: 0 14px; height: 40px; }
    .open { padding-right: 8px; }
  `];
  render() {
    return html`
      <div class="name"><input aria-label="Name box" value="B15" />
        <div class="steps"><button aria-label="Previous">${icons.tri("up", "#666")}</button><button aria-label="Next">${icons.tri("down", "#666")}</button></div></div>
      <div class="tools"><button aria-label="Cancel">${icons.cancel}</button><button aria-label="Enter">${icons.check}</button><button class="fx">fx</button></div>
      <input class="value" aria-label="Formula" value="Disposal value now" />
      <button class="open" aria-label="Expand formula bar">${icons.tri("down", "#666")}</button>`;
  }
}

@customElement("sheet-grid")
export class SheetGrid extends LitElement {
  static styles = [shared, css`
    :host { display: flex; flex: 1; min-height: 0; background: #fff; }
    .main { flex: 1; min-width: 0; display: flex; flex-direction: column; }
    .view { flex: 1; min-height: 0; overflow: hidden; border-bottom: 2px solid #e4e4e4; }
    table { width: 100%; table-layout: fixed; border-collapse: separate; border-spacing: 0; color: #000; font: 24px/28px "Liberation Sans", Arial, sans-serif; }
    .c-head { width: 46px; } .c-a { width: 106px; } .c-b { width: 1120px; } .c-c { width: 144px; } .c-d { width: 166px; } .c-std { width: 106px; }
    th { padding: 0; color: #5a5a5a; font: 20px/28px Lato, sans-serif; }
    thead th { height: 44px; background: linear-gradient(#fdfdfd, #f5f5f5); border-bottom: 2px solid #b4b4b4; border-right: 2px solid #dcdcdc; }
    thead th.on { background: #f1f1f1; color: #38744a; border-bottom: 4px solid #38744a; }
    thead .corner { border-right-color: #b4b4b4; }
    .corner svg { margin: 6px 0 0 10px; }
    tbody th { vertical-align: bottom; background: linear-gradient(90deg, #fdfdfd, #f5f5f5); border-right: 2px solid #b4b4b4; border-bottom: 2px solid #e2e2e2; }
    tbody th.on { background: #f1f1f1; color: #38744a; border-right: 4px solid #38744a; }
    td { padding: 0 3px 0 4px; vertical-align: bottom; white-space: nowrap; border-right: 2px solid #d4d4d4; border-bottom: 2px solid #d4d4d4; }
    td:last-child, thead th:last-child { border-right: 0; }
    .h30 { height: 30px; } .h32 { height: 32px; } .h34 { height: 34px; } .h36 { height: 36px; padding-bottom: 2px; }
    .ink { border-right: 4px solid #000; border-bottom: 4px solid #000; }
    .num { font: inherit; text-align: right; }
    .head { text-align: center; font-weight: 700; }
    .inkright { border-right: 4px solid #000; }
    .inkbottom { border-bottom: 4px solid #000; }
    .first { box-shadow: -4px -4px 0 #000; }
    .picked { position: relative; border-color: #fff; }
    .frame { position: absolute; inset: -4px -6px -6px -4px; border: 4px solid #38744a; pointer-events: none; }
    .frame::after { content: ""; position: absolute; right: -8px; bottom: -6px; width: 14px; height: 14px; background: #38744a; border: 2px solid #fff; }
    .hbar { display: flex; height: 28px; padding: 6px 8px 0 4px; background: #fafafa; border-bottom: 2px solid #ededed; }
    .hthumb { width: 68%; height: 18px; border-radius: 9px; background: #b9b9b9; }
    .hgrip { width: 2px; height: 28px; margin: -6px 0 0 auto; background: #b4b4b4; }
    .vbar { flex: none; width: 30px; display: flex; flex-direction: column; align-items: center; background: #fafafa; border-left: 2px solid #e4e4e4; border-right: 2px solid #ececec; }
    .vgrip { align-self: stretch; height: 8px; background: #fff; border-bottom: 2px solid #c4c4c4; }
    .vthumb { width: 18px; height: 902px; max-height: 90%; margin-top: 4px; border-radius: 9px; background: #b9b9b9; }
  `];

  private height(r: number) {
    if (r === 1 || r > 25) return "h30";
    if (r === 6) return "h34";
    return r >= TABLE_START && r < TABLE_START + TABLE.length ? "h36" : "h32";
  }

  private cells(r: number) {
    const entry = TABLE[r - TABLE_START];
    const blanks = (n: number) => Array.from({ length: n }, () => html`<td></td>`);
    if (entry) {
      const top = r === TABLE_START;
      const picked = r === SELECTED_ROW;
      const value = classMap({ ink: true, num: !top, head: top });
      return html`<td class="inkright"></td>
        <td class=${classMap({ ink: true, first: top, picked })}>${entry.label}${picked ? html`<span class="frame"></span>` : nothing}</td>
        <td class=${value}>${entry.old}</td><td class=${value}>${entry.next}</td>${blanks(12)}`;
    }
    if (r === TABLE_START - 1) {
      return html`<td></td>${[0, 1, 2].map(() => html`<td class="inkbottom"></td>`)}${blanks(12)}`;
    }
    const note = NOTES[r];
    return note ? html`<td></td><td colspan=${note.span}>${note.body}</td>${blanks(15 - note.span)}` : blanks(16);
  }

  render() {
    return html`
      <div class="main">
        <div class="view"><table>
          <colgroup><col class="c-head" /><col class="c-a" /><col class="c-b" /><col class="c-c" /><col class="c-d" />${Array.from({ length: 11 }, () => html`<col class="c-std" />`)}<col /></colgroup>
          <thead><tr><th class="corner" aria-label="Select all">${icon(30, 30, "0 0 30 30", svg`<path d="M30 0 V30 H0 Z" fill="#dedede" />`)}</th>
            ${COLUMNS.map((c) => html`<th scope="col" class=${c === "B" ? "on" : ""}>${c}</th>`)}</tr></thead>
          <tbody>${Array.from({ length: 40 }, (_, i) => i + 1).map((r) => html`
            <tr><th scope="row" class=${classMap({ [this.height(r)]: true, on: r === SELECTED_ROW })}>${r}</th>${this.cells(r)}</tr>`)}</tbody>
        </table></div>
        <div class="hbar"><div class="hthumb"></div><div class="hgrip"></div></div>
      </div>
      <div class="vbar"><div class="vgrip"></div><div class="vthumb"></div></div>`;
  }
}

@customElement("sheet-tabs")
export class SheetTabs extends LitElement {
  static styles = [shared, css`
    :host { display: flex; align-items: flex-start; height: 52px; background: linear-gradient(#e8e8e8, #f0f0f0 8px); border-top: 2px solid #cbcbcb; color: #606060; font: 25px/28px "Liberation Sans", Arial, sans-serif; }
    .nav { display: flex; gap: 30px; width: 122px; height: 42px; padding: 8px 0 0 30px; border-right: 2px solid #cbcbcb; }
    button { height: 42px; padding-top: 4px; border-right: 2px solid #cbcbcb; }
    .nav button { height: 34px; padding: 0; border: 0; }
    .tab { width: 188px; }
    .tab.wide { width: 200px; }
    .tab.full { width: 300px; }
    .tab.on { width: 192px; height: 46px; margin-top: -2px; padding-top: 6px; background: #fff; border-bottom: 2px solid #b0b0b0; border-radius: 0 0 6px 6px; color: #43804f; font-weight: 700; }
    .add { width: 76px; }
  `];
  render() {
    return html`
      <div class="nav"><button aria-label="Previous sheet">${icons.tri("left", "#b5b5b5")}</button><button aria-label="Next sheet">${icons.tri("right", "#b5b5b5")}</button></div>
      ${SHEETS.map((s, i) => html`<button class=${classMap({ tab: true, on: i === 2, wide: i === 0, full: i === 5 })}>${s}</button>`)}
      <button class="add" aria-label="Add sheet">${icons.add}</button>`;
  }
}

@customElement("status-bar")
export class StatusBar extends LitElement {
  static styles = [shared, css`
    :host { display: flex; align-items: stretch; height: 46px; padding: 0 50px 0 48px; background: linear-gradient(#e3e3e3, #d6d6d6); border-top: 2px solid #a0a0a0; color: #4f4f4f; font-size: 24px; }
    .left { flex: 1; display: flex; align-items: center; gap: 38px; }
    .access { gap: 8px; }
    .view { width: 72px; }
    .view.on { background: #a3a3a3; }
    .zoom { display: flex; align-items: center; gap: 14px; padding-left: 14px; }
    .zoom input { width: 200px; height: 34px; }
    .zoom input::-webkit-slider-runnable-track { height: 8px; border-radius: 4px; background: #9b9b9b; }
    .zoom input::-webkit-slider-thumb { appearance: none; width: 32px; height: 32px; margin-top: -12px; border-radius: 16px; background: #fff; box-shadow: 0 1px 3px #999; }
    .pct { width: 94px; justify-content: flex-end; }
  `];
  render() {
    return html`
      <div class="left"><span>Ready</span><button class="access">${icons.a11y}Accessibility: Investigate</button></div>
      <button class="view on" aria-label="Normal view">${icons.viewNormal}</button>
      <button class="view" aria-label="Page layout view">${icons.viewPage}</button>
      <button class="view" aria-label="Page break view">${icons.viewBreak}</button>
      <div class="zoom"><button aria-label="Zoom out">${icons.minus}</button>
        <input type="range" min="0" max="200" value="100" aria-label="Zoom" />
        <button aria-label="Zoom in">${icons.plus}</button></div>
      <button class="pct">100%</button>`;
  }
}

@customElement("app-root")
export class AppRoot extends LitElement {
  static styles = css`
    :host { display: flex; flex-direction: column; height: 100vh; min-width: 0; overflow: hidden; font-family: Inter, "Liberation Sans", sans-serif; font-size: 22px; }
  `;
  render() {
    return html`<title-bar></title-bar><ribbon-bar></ribbon-bar><formula-bar></formula-bar><sheet-grid></sheet-grid><sheet-tabs></sheet-tabs><status-bar></status-bar>`;
  }
}
